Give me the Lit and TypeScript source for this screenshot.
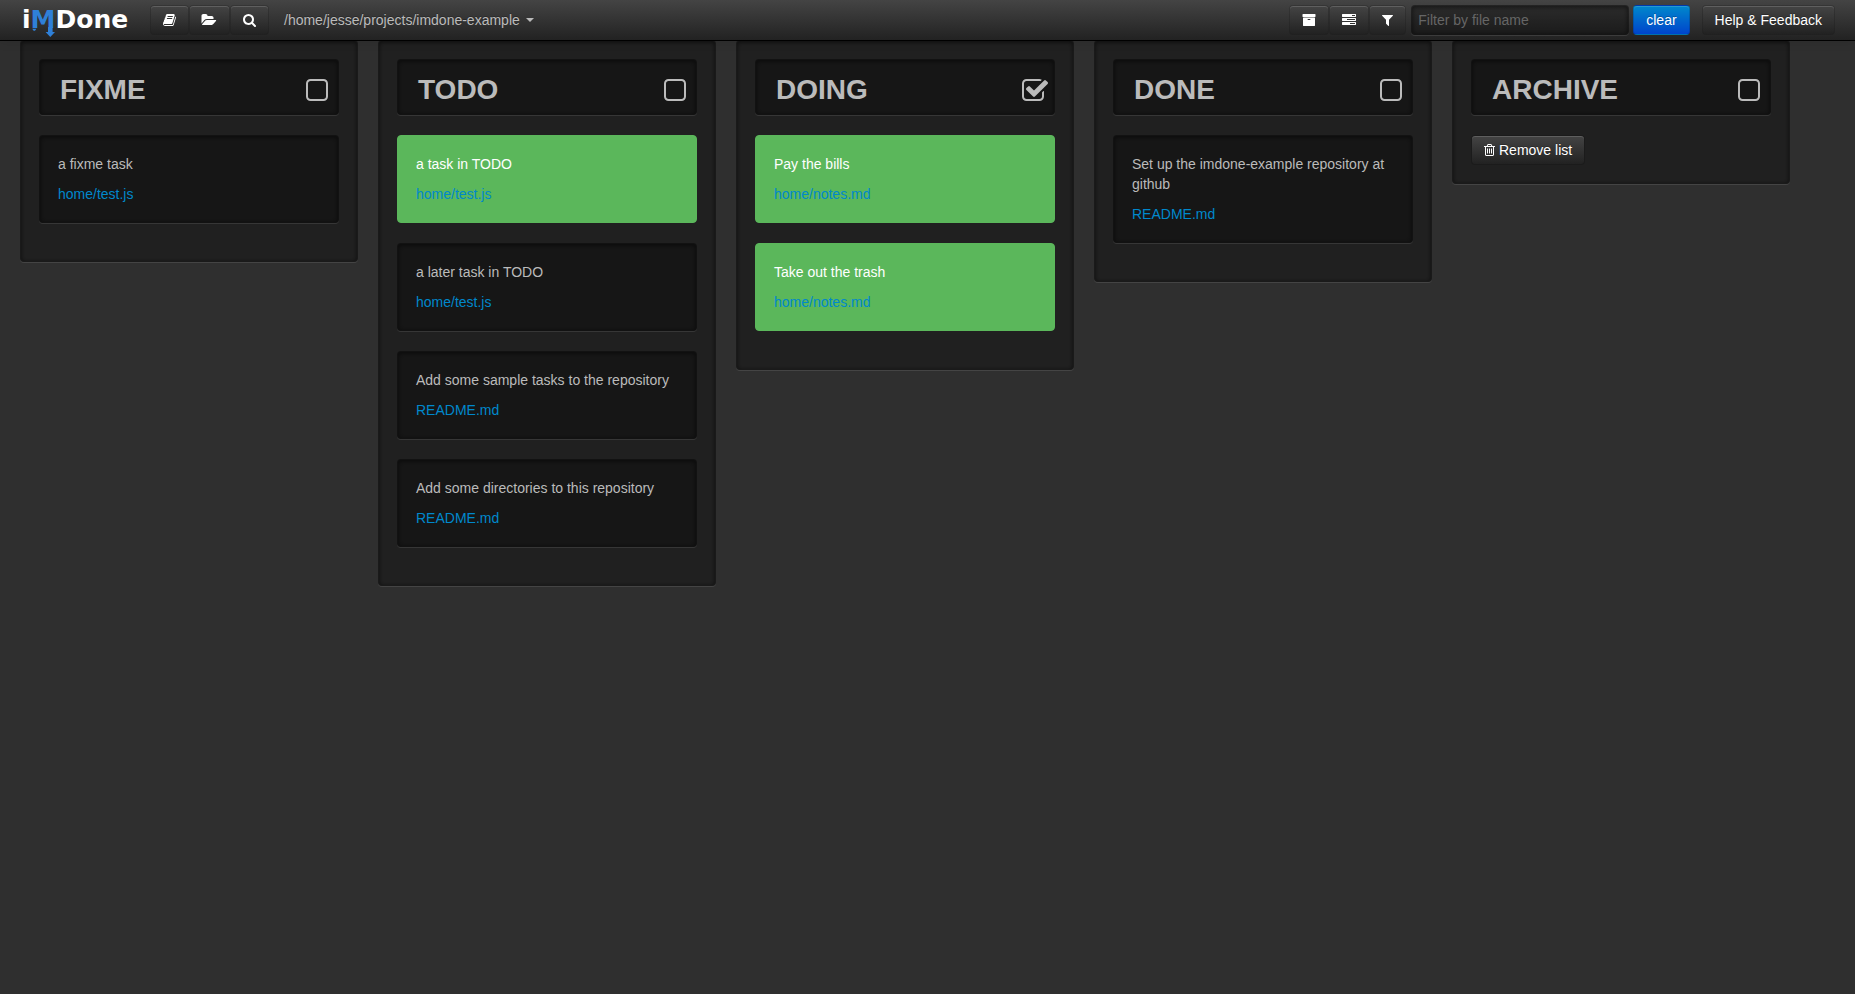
import { LitElement, html, css, svg, nothing } from "lit";
import { customElement, property, state } from "lit/decorators.js";
import { classMap } from "lit/directives/class-map.js";

interface Glyph {
  box: string;
  width: number;
  path: string;
}

// Glyphs are drawn on a 1792-unit em square.
const GLYPHS: Record<string, Glyph> = {
  book: {
    box: "64 0 1664 1792",
    width: 13,
    path: "M1703 478q40 57 18 129l-275 906q-19 64-76.5 107.5t-122.5 43.5h-923q-77 0-148.5-53.5t-99.5-131.5q-24-67-2-127 0-4 3-27t4-37q1-8-3-21.5t-3-19.5q2-11 8-21t16.5-23.5 16.5-23.5q23-38 45-91.5t30-91.5q3-10 .5-30t-.5-28q3-11 17-28t17-23q21-36 42-92t25-90q1-9-2.5-32t.5-28q4-13 22-30.5t22-22.5q19-26 42.5-84.5t27.5-96.5q1-8-3-25.5t-2-26.5q2-8 9-18t18-23 17-21q8-12 16.5-30.5t15-35 16-36 19.5-32 26.5-23.5 36-11.5 47.5 5.5l-1 3q38-9 51-9h761q74 0 114 56t18 130l-274 906q-36 119-71.5 153.5t-128.5 34.5h-869q-27 0-38 15-11 16-1 43 24 70 144 70h923q29 0 56-15.5t35-41.5l300-987q7-22 5-57 38 15 59 43zm-1064 2q-4 13 2 22.5t20 9.5h608q13 0 25.5-9.5t16.5-22.5l21-64q4-13-2-22.5t-20-9.5h-608q-13 0-25.5 9.5t-16.5 22.5zm-83 256q-4 13 2 22.5t20 9.5h608q13 0 25.5-9.5t16.5-22.5l21-64q4-13-2-22.5t-20-9.5h-608q-13 0-25.5 9.5t-16.5 22.5z",
  },
  folder: {
    box: "0 0 1920 1792",
    width: 15,
    path: "M1815 952q0 31-31 66l-336 396q-43 51-120.5 86.5t-143.5 35.5h-1088q-34 0-60.5-13t-26.5-43q0-31 31-66l336-396q43-51 120.5-86.5t143.5-35.5h1088q34 0 60.5 13t26.5 43zm-343-344v160h-832q-94 0-197 47.5t-164 119.5l-337 396-5 6q0-4-.5-12.5t-.5-12.5v-960q0-92 66-158t158-66h320q92 0 158 66t66 158v32h544q92 0 158 66t66 158z",
  },
  search: {
    box: "64 0 1664 1792",
    width: 13,
    path: "M1216 832q0-185-131.5-316.5t-316.5-131.5-316.5 131.5-131.5 316.5 131.5 316.5 316.5 131.5 316.5-131.5 131.5-316.5zm512 832q0 52-38 90t-90 38q-54 0-90-38l-343-342q-179 124-399 124-143 0-273.5-55.5t-225-150-150-225-55.5-273.5 55.5-273.5 150-225 225-150 273.5-55.5 273.5 55.5 225 150 150 225 55.5 273.5q0 220-124 399l343 343q37 37 37 90z",
  },
  archive: {
    box: "0 0 1792 1792",
    width: 14,
    path: "M1088 832q0-26-19-45t-45-19h-256q-26 0-45 19t-19 45 19 45 45 19h256q26 0 45-19t19-45zm576-192v960q0 26-19 45t-45 19h-1408q-26 0-45-19t-19-45v-960q0-26 19-45t45-19h1408q26 0 45 19t19 45zm64-448v256q0 26-19 45t-45 19h-1536q-26 0-45-19t-19-45v-256q0-26 19-45t45-19h1536q26 0 45 19t19 45z",
  },
  tasks: {
    box: "0 0 1792 1792",
    width: 14,
    path: "M1024 1408h640v-128h-640v128zm-384-512h1024v-128h-1024v128zm640-512h384v-128h-384v128zm512 832v256q0 26-19 45t-45 19h-1664q-26 0-45-19t-19-45v-256q0-26 19-45t45-19h1664q26 0 45 19t19 45zm0-512v256q0 26-19 45t-45 19h-1664q-26 0-45-19t-19-45v-256q0-26 19-45t45-19h1664q26 0 45 19t19 45zm0-512v256q0 26-19 45t-45 19h-1664q-26 0-45-19t-19-45v-256q0-26 19-45t45-19h1664q26 0 45 19t19 45z",
  },
  filter: {
    box: "192 0 1408 1792",
    width: 11,
    path: "M1595 295q17 41-14 70l-493 493v742q0 42-39 59-13 5-25 5-27 0-45-19l-256-256q-19-19-19-45v-486l-493-493q-31-29-14-70 17-39 59-39h1280q42 0 59 39z",
  },
  trash: {
    box: "192 0 1408 1792",
    width: 11,
    path: "M704 736v576q0 14-9 23t-23 9h-64q-14 0-23-9t-9-23v-576q0-14 9-23t23-9h64q14 0 23 9t9 23zm256 0v576q0 14-9 23t-23 9h-64q-14 0-23-9t-9-23v-576q0-14 9-23t23-9h64q14 0 23 9t9 23zm256 0v576q0 14-9 23t-23 9h-64q-14 0-23-9t-9-23v-576q0-14 9-23t23-9h64q14 0 23 9t9 23zm128 724v-948h-896v948q0 22 7 40.5t14.5 27 10.5 8.5h832q3 0 10.5-8.5t14.5-27 7-40.5zm-672-1076h448l-48-117q-7-9-17-11h-317q-10 2-17 11zm928 32v64q0 14-9 23t-23 9h-96v948q0 83-47 143.5t-113 60.5h-832q-66 0-113-58.5t-47-141.5v-952h-96q-14 0-23-9t-9-23v-64q0-14 9-23t23-9h309l70-167q15-37 54-63t79-26h320q40 0 79 26t54 63l70 167h309q14 0 23 9t9 23z",
  },
  unchecked: {
    box: "192 0 1664 1792",
    width: 26,
    path: "M1312 256h-832q-66 0-113 47t-47 113v832q0 66 47 113t113 47h832q66 0 113-47t47-113v-832q0-66-47-113t-113-47zm288 160v832q0 119-84.5 203.5t-203.5 84.5h-832q-119 0-203.5-84.5t-84.5-203.5v-832q0-119 84.5-203.5t203.5-84.5h832q119 0 203.5 84.5t84.5 203.5z",
  },
  checked: {
    box: "64 0 1664 1792",
    width: 26,
    path: "M1472 930v318q0 119-84.5 203.5t-203.5 84.5h-832q-119 0-203.5-84.5t-84.5-203.5v-832q0-119 84.5-203.5t203.5-84.5h832q63 0 117 25 15 7 18 23 3 17-9 29l-49 49q-10 10-23 10-3 0-9-2-23-6-45-6h-832q-66 0-113 47t-47 113v832q0 66 47 113t113 47h832q66 0 113-47t47-113v-254q0-13 9-22l64-64q10-10 23-10 6 0 12 3 20 8 20 29zm231-489l-814 814q-24 24-57 24t-57-24l-430-430q-24-24-24-57t24-57l110-110q24-24 57-24t57 24l263 263 647-647q24-24 57-24t57 24l110 110q24 24 24 57t-24 57z",
  },
};

function glyph(name: string, height = 14) {
  const g = GLYPHS[name];
  return html`<svg
    class="glyph"
    viewBox=${g.box}
    width=${g.width}
    height=${height}
    aria-hidden="true"
  >
    ${svg`<path d=${g.path} />`}
  </svg>`;
}

interface Task {
  text: string;
  file: string;
  selected?: boolean;
}

interface List {
  name: string;
  selected: boolean;
  tasks: Task[];
}

const LISTS: List[] = [
  {
    name: "FIXME",
    selected: false,
    tasks: [{ text: "a fixme task", file: "home/test.js" }],
  },
  {
    name: "TODO",
    selected: false,
    tasks: [
      { text: "a task in TODO", file: "home/test.js", selected: true },
      { text: "a later task in TODO", file: "home/test.js" },
      { text: "Add some sample tasks to the repository", file: "README.md" },
      { text: "Add some directories to this repository", file: "README.md" },
    ],
  },
  {
    name: "DOING",
    selected: true,
    tasks: [
      { text: "Pay the bills", file: "home/notes.md", selected: true },
      { text: "Take out the trash", file: "home/notes.md", selected: true },
    ],
  },
  {
    name: "DONE",
    selected: false,
    tasks: [
      {
        text: "Set up the imdone-example repository at github",
        file: "README.md",
      },
    ],
  },
  { name: "ARCHIVE", selected: false, tasks: [] },
];

const controls = css`
  * {
    box-sizing: border-box;
  }
  .glyph {
    display: block;
    fill: currentColor;
    overflow: visible;
  }
  .btn {
    display: inline-flex;
    align-items: center;
    gap: 4px;
    height: 30px;
    padding: 0 12px;
    margin: 0;
    border: 1px solid rgba(0, 0, 0, 0.15);
    border-radius: 4px;
    background: linear-gradient(#444, #222) padding-box;
    box-shadow: inset 0 1px 0 rgba(255, 255, 255, 0.15);
    color: #fff;
    font: 14px/20px "Liberation Sans", Arial, sans-serif;
    text-decoration: none;
    text-shadow: 0 -1px 0 rgba(0, 0, 0, 0.25);
    white-space: nowrap;
    cursor: pointer;
  }
  .btn-primary {
    background: linear-gradient(#08c, #04c);
  }
`;

@customElement("task-list")
export class TaskList extends LitElement {
  @property({ attribute: false }) list!: List;
  @state() private toggled = false;

  static styles = [
    controls,
    css`
      :host {
        display: block;
        flex: 0 0 338px;
      }
      .well {
        border: 1px solid rgba(0, 0, 0, 0.2);
        border-radius: 4px;
        background: rgba(0, 0, 0, 0.3);
        box-shadow:
          0 1px 0 rgba(255, 255, 255, 0.1),
          inset 0 1px 5px rgba(0, 0, 0, 0.6);
      }
      .list {
        display: flex;
        flex-direction: column;
        align-items: stretch;
        gap: 20px;
        padding: 18px;
      }
      .list.filled {
        padding-bottom: 38px;
      }
      .head {
        display: flex;
        align-items: flex-start;
        justify-content: space-between;
        padding: 17px 6px 9px 20px;
      }
      .name {
        margin: 0;
        font-size: 28px;
        line-height: 26px;
        font-weight: bold;
        color: #bbb;
      }
      .toggle {
        display: grid;
        color: #bbb;
        cursor: pointer;
      }
      .toggle > * {
        grid-area: 1 / 1;
      }
      .toggle input {
        width: 100%;
        height: 100%;
        margin: 0;
        opacity: 0;
        cursor: pointer;
      }
      .task {
        padding: 18px;
      }
      .task.selected {
        border-color: #5bb75b;
        background: #5bb75b;
        box-shadow: none;
        color: #fff;
      }
      .text {
        margin: 0 0 10px;
      }
      .file {
        display: block;
        color: #08c;
        text-decoration: none;
      }
      .remove {
        align-self: flex-start;
      }
    `,
  ];

  private get isSelected() {
    return this.toggled ? !this.list.selected : this.list.selected;
  }

  render() {
    const { name, tasks } = this.list;
    return html`
      <section class=${classMap({ well: true, list: true, filled: tasks.length > 0 })}>
        <header class="well head">
          <h2 class="name">${name}</h2>
          <label class="toggle">
            ${glyph(this.isSelected ? "checked" : "unchecked", 28)}
            <input
              type="checkbox"
              aria-label="Select all in ${name}"
              .checked=${this.isSelected}
              @change=${() => (this.toggled = !this.toggled)}
            />
          </label>
        </header>
        ${tasks.map(
          (task) => html`
            <article class=${classMap({ well: true, task: true, selected: !!task.selected })}>
              <p class="text">${task.text}</p>
              <a class="file" href="#">${task.file}</a>
            </article>
          `
        )}
        ${tasks.length
          ? nothing
          : html`<button class="btn remove" type="button">
              ${glyph("trash")}<span>Remove list</span>
            </button>`}
      </section>
    `;
  }
}

@customElement("app-root")
export class AppRoot extends LitElement {
  @state() private filter = "";

  static styles = [
    controls,
    css`
      :host {
        display: flex;
        flex-direction: column;
        min-height: 100vh;
        background: #2f2f2f;
        color: #bbb;
        font: 14px/20px "Liberation Sans", Arial, sans-serif;
      }
      .navbar {
        position: relative;
        z-index: 1;
        display: flex;
        align-items: center;
        justify-content: space-between;
        gap: 20px;
        padding: 5px 20px;
        border-bottom: 1px solid #000;
        background: linear-gradient(#444, #222);
        box-shadow: 0 1px 10px rgba(0, 0, 0, 0.1);
      }
      .side,
      .group {
        display: flex;
        align-items: center;
      }
      .logo {
        position: relative;
        width: 130px;
        padding-left: 2px;
        color: #fff;
        font: bold 25px/30px "DejaVu Sans", sans-serif;
        text-decoration: none;
      }
      .logo .m {
        color: #2f80d8;
      }
      .logo .marks {
        position: absolute;
        left: 10px;
        top: 22px;
        fill: #2f80d8;
      }
      .path {
        display: flex;
        align-items: center;
        gap: 6px;
        padding: 5px 15px;
        border: 0;
        background: none;
        color: #bbb;
        font: inherit;
        text-shadow: 0 -1px 0 rgba(0, 0, 0, 0.25);
        cursor: pointer;
      }
      .caret {
        border: 4px solid transparent;
        border-top-color: currentColor;
        border-bottom: 0;
      }
      .filter {
        display: flex;
        align-items: center;
        gap: 4px;
        margin: 0 12px 0 5px;
      }
      .filter input {
        width: 218px;
        height: 30px;
        padding: 4px 6px;
        border: 1px solid rgba(0, 0, 0, 0.2);
        border-radius: 4px;
        background: rgba(0, 0, 0, 0.3);
        box-shadow:
          0 1px 0 rgba(255, 255, 255, 0.1),
          inset 0 1px 5px rgba(0, 0, 0, 0.6);
        color: #bbb;
        font: inherit;
        outline: 0;
      }
      .filter input::placeholder {
        color: #666;
        opacity: 1;
      }
      .board {
        display: flex;
        flex: 1;
        align-items: flex-start;
        gap: 20px;
        margin-top: -1px;
        padding: 0 20px 20px;
        overflow-x: auto;
      }
    `,
  ];

  render() {
    return html`
      <nav class="navbar">
        <div class="side">
          <a class="logo" href="#" aria-label="iMDone"
            >i<span class="m">M</span>Done<svg
              class="marks"
              width="28"
              height="12"
              viewBox="0 0 28 12"
              aria-hidden="true"
            >
              ${svg`<path d="M2.2 1.8h4.2L5 3.8H3.6zM18 0h4.6v5H25l-4.7 5-4.7-5H18z" />`}
            </svg></a
          >
          <div class="group">
            <button class="btn" type="button" aria-label="Readme">${glyph("book")}</button>
            <button class="btn" type="button" aria-label="Files">${glyph("folder")}</button>
            <button class="btn" type="button" aria-label="Search">${glyph("search")}</button>
          </div>
          <button class="path" type="button">
            <span>/home/jesse/projects/imdone-example</span><span class="caret"></span>
          </button>
        </div>
        <div class="side">
          <div class="group">
            <button class="btn" type="button" aria-label="Archive">${glyph("archive")}</button>
            <button class="btn" type="button" aria-label="Lists">${glyph("tasks")}</button>
            <button class="btn" type="button" aria-label="Filter">${glyph("filter")}</button>
          </div>
          <div class="filter">
            <input
              type="text"
              placeholder="Filter by file name"
              aria-label="Filter by file name"
              .value=${this.filter}
              @input=${(e: Event) => (this.filter = (e.target as HTMLInputElement).value)}
            />
            <button class="btn btn-primary" type="button" @click=${() => (this.filter = "")}>
              clear
            </button>
          </div>
          <a class="btn" href="#">Help &amp; Feedback</a>
        </div>
      </nav>
      <main class="board">
        ${LISTS.map((list) => html`<task-list .list=${list}></task-list>`)}
      </main>
    `;
  }
}
